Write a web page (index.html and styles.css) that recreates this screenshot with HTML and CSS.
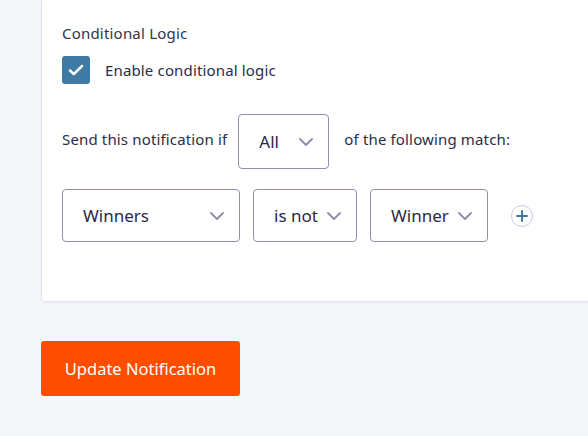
FILE: index.html
```html
<!DOCTYPE html>
<html>
<head>
<meta charset="utf-8">
<link rel="stylesheet" href="styles.css">
</head>
<body>
<div class="card">
  <div class="label">Conditional Logic</div>
  <label class="check-row">
    <span class="checkbox">
      <svg width="18" height="18" viewBox="0 0 18 18"><path d="M3 9.5l3.8 3.6L15 5" fill="none" stroke="#fff" stroke-width="2.5" stroke-linecap="round" stroke-linejoin="round"/></svg>
    </span>
    <span class="check-text">Enable conditional logic</span>
  </label>
  <div class="send-row">
    <span>Send this notification if</span>
    <div class="select sel-all"><span>All</span><svg class="chev" width="14" height="8" viewBox="0 0 14 8"><path d="M1 1l6 6 6-6" fill="none" stroke="#8c8cab" stroke-width="1.8" stroke-linecap="round" stroke-linejoin="round"/></svg></div>
    <span>of the following match:</span>
  </div>
  <div class="cond-row">
    <div class="select sel-field"><span>Winners</span><svg class="chev" width="14" height="8" viewBox="0 0 14 8"><path d="M1 1l6 6 6-6" fill="none" stroke="#8c8cab" stroke-width="1.8" stroke-linecap="round" stroke-linejoin="round"/></svg></div>
    <div class="select sel-op"><span>is not</span><svg class="chev" width="14" height="8" viewBox="0 0 14 8"><path d="M1 1l6 6 6-6" fill="none" stroke="#8c8cab" stroke-width="1.8" stroke-linecap="round" stroke-linejoin="round"/></svg></div>
    <div class="select sel-val"><span>Winner</span><svg class="chev" width="14" height="8" viewBox="0 0 14 8"><path d="M1 1l6 6 6-6" fill="none" stroke="#8c8cab" stroke-width="1.8" stroke-linecap="round" stroke-linejoin="round"/></svg></div>
    <span class="add">
      <svg width="12" height="12" viewBox="0 0 12 12"><path d="M6 1v10M1 6h10" stroke="#3e7ca6" stroke-width="2" stroke-linecap="round"/></svg>
    </span>
  </div>
</div>
<button class="btn">Update Notification</button>
</body>
</html>
```
FILE: styles.css
```css
html, body {
  margin: 0;
  padding: 0;
}
body {
  background: #f5f6f9;
  font-family: "Noto Sans", "Open Sans", sans-serif;
  color: #2c2c48;
  width: 588px;
  height: 436px;
  overflow: hidden;
}
.card {
  margin-left: 41px;
  margin-right: -20px;
  background: #fff;
  border-left: 1px solid #e4e4ee;
  border-bottom: 1px solid #e4e4ee;
  border-bottom-left-radius: 4px;
  box-shadow: 0 1px 3px rgba(40, 40, 90, 0.05);
  padding: 22px 0 59px 20px;
}
.label {
  font-size: 15px;
  line-height: 22px;
  color: #33334a;
  letter-spacing: 0.2px;
}
.check-row {
  display: flex;
  align-items: center;
  gap: 15px;
  margin-top: 12px;
}
.checkbox {
  width: 28px;
  height: 28px;
  border-radius: 3px;
  background: #3f7ba5;
  display: flex;
  align-items: center;
  justify-content: center;
}
.check-text {
  font-size: 15px;
  letter-spacing: 0.15px;
}
.send-row {
  display: flex;
  align-items: center;
  gap: 11px;
  margin-top: 30px;
  font-size: 15px;
  letter-spacing: 0.15px;
}
.send-row > span:first-child {
  margin-top: -5px;
}
.send-row > span:last-child {
  margin-left: 4px;
  margin-top: -5px;
}
.select {
  box-sizing: border-box;
  border: 1px solid #8f8fb0;
  border-radius: 4px;
  display: flex;
  align-items: center;
  justify-content: space-between;
  padding: 0 15px 0 20px;
  font-size: 17px;
  letter-spacing: 0;
  color: #2a2a46;
  background: #fff;
}
.sel-all {
  width: 91px;
  height: 55px;
}
.cond-row {
  display: flex;
  align-items: center;
  gap: 13px;
  margin-top: 20px;
}
.cond-row .select {
  height: 53px;
}
.sel-field { width: 178px; }
.sel-op { width: 104px; }
.sel-val { width: 118px; }
.add {
  box-sizing: border-box;
  width: 22px;
  height: 22px;
  border: 1px solid #c9c9e0;
  border-radius: 50%;
  display: flex;
  align-items: center;
  justify-content: center;
  margin-left: 10px;
}
.btn {
  display: block;
  margin: 39px 0 0 41px;
  width: 199px;
  height: 55px;
  border: 0;
  border-radius: 3px;
  background: #ff4d00;
  color: #fff;
  font-family: "Noto Sans", "Open Sans", sans-serif;
  font-size: 16.5px;
  padding: 0;
}
```
